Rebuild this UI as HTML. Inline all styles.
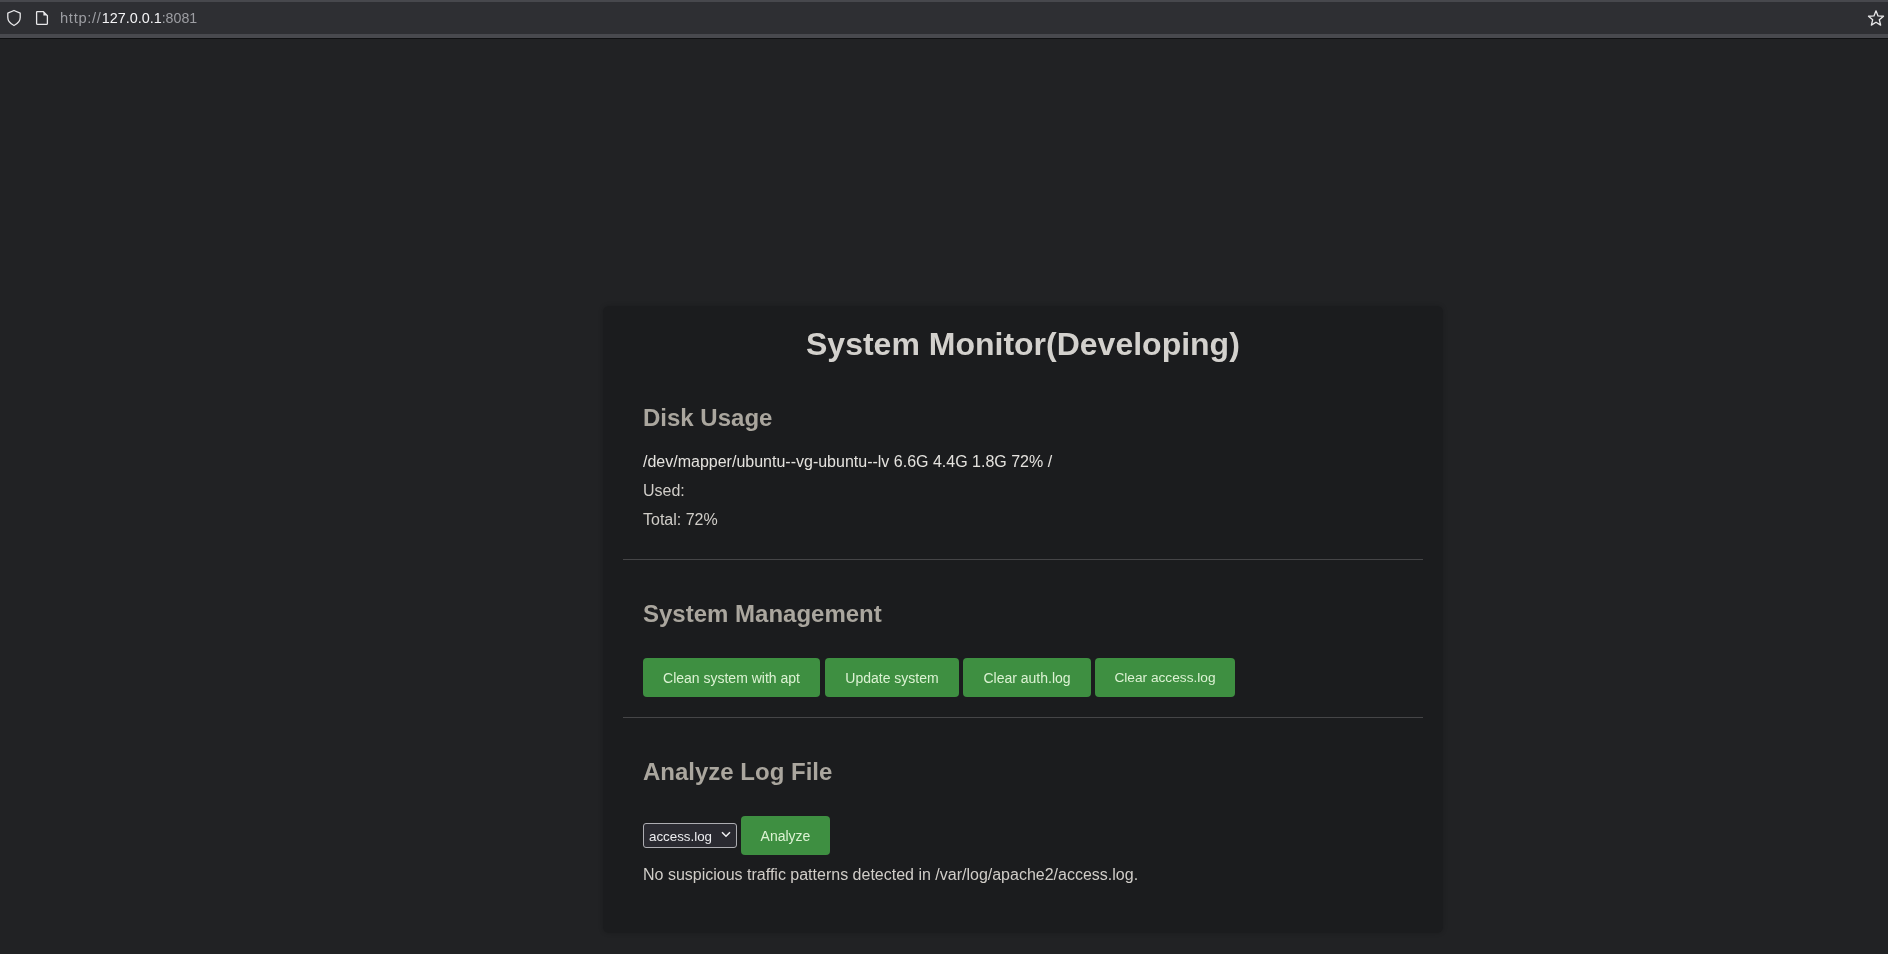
<!DOCTYPE html>
<html>
<head>
<meta charset="utf-8">
<style>
html,body{margin:0;padding:0;}
body{width:1888px;height:954px;background:#212224;overflow:hidden;position:relative;font-family:"Liberation Sans",sans-serif;}
#bar{will-change:transform;position:absolute;left:0;top:0;width:1888px;height:39px;background:#2e2f33;}
#bar .t{position:absolute;left:0;top:0;width:100%;height:2px;background:#47484d;}
#bar .b{position:absolute;left:0;top:34px;width:100%;height:4px;background:#48494e;}
#bar .d{position:absolute;left:0;top:38px;width:100%;height:1px;background:#0f1012;}
#url{position:absolute;left:60px;top:8px;font-size:14.7px;line-height:20px;color:#9d9ea3;white-space:nowrap;}
#url b{font-weight:normal;color:#f4f4f6;font-size:14.4px;}
svg{position:absolute;display:block;}
#card{will-change:transform;position:absolute;left:603px;top:306px;width:840px;height:627px;background:#1b1c1e;border-radius:6px;box-shadow:0 0 5px rgba(0,0,0,0.2);}
.abs{position:absolute;white-space:nowrap;}
.h1{font-size:32px;font-weight:bold;color:#d3d1cd;}
.h2{font-size:24px;font-weight:bold;color:#aaa69e;}
.p{font-size:16px;color:#d0cdc8;}
.hr{position:absolute;left:20px;width:800px;height:1px;background:#454547;}
.btn{position:absolute;height:27px;padding-top:12px;background:#3e8f41;border-radius:4px;color:#dcf2d3;font-size:14px;line-height:16px;text-align:center;}
#sel{position:absolute;left:40px;top:517px;width:92px;height:23px;border:1px solid #adadb2;border-radius:3px;background:#2a2a31;}
</style>
</head>
<body>
<div id="bar">
  <div class="t"></div>
  <div class="b"></div>
  <div class="d"></div>
  <svg style="left:6px;top:9px" width="16" height="18" viewBox="0 0 16 18"><path d="M8 1.5 L14.2 4.2 L14.2 8.5 C14.2 12.5 11 15 8 16.5 C5 15 1.8 12.5 1.8 8.5 L1.8 4.2 Z" fill="none" stroke="#e8e8ea" stroke-width="1.3" stroke-linejoin="round"/></svg>
  <svg style="left:35px;top:10px" width="14" height="16" viewBox="0 0 14 16"><path d="M2.2 1.6 L8.4 1.6 L12.4 5.6 L12.4 13.4 Q12.4 14.4 11.4 14.4 L2.6 14.4 Q1.6 14.4 1.6 13.4 L1.6 2.2 Q1.6 1.6 2.2 1.6 Z" fill="none" stroke="#e8e8ea" stroke-width="1.3" stroke-linejoin="round"/><path d="M8.4 1.6 L8.4 5.6 L12.4 5.6 Z" fill="#e8e8ea"/></svg>
  <div id="url"><span style="letter-spacing:0.7px">http://</span><b>127.0.0.1</b><span style="font-size:14.2px">:8081</span></div>
  <svg style="left:1867px;top:9px" width="18" height="18" viewBox="0 0 18 18"><path d="M9.00 1.80 L11.04 6.89 L16.51 7.26 L12.31 10.77 L13.64 16.09 L9.00 13.18 L4.36 16.09 L5.69 10.77 L1.49 7.26 L6.96 6.89 Z" fill="none" stroke="#e8e8ea" stroke-width="1.3" stroke-linejoin="round"/></svg>
</div>

<div id="card">
  <div class="abs h1" style="left:203px;top:20px;line-height:36px;">System Monitor(Developing)</div>
  <div class="abs h2" style="left:40px;top:98px;line-height:28px;">Disk Usage</div>
  <div class="abs p" style="left:40px;top:147px;line-height:18px;color:#e4e2de;">/dev/mapper/ubuntu--vg-ubuntu--lv 6.6G 4.4G 1.8G 72% /</div>
  <div class="abs p" style="left:40px;top:176px;line-height:18px;">Used:</div>
  <div class="abs p" style="left:40px;top:205px;line-height:18px;">Total: 72%</div>
  <div class="hr" style="top:253px;"></div>

  <div class="abs h2" style="left:40px;top:294px;line-height:28px;">System Management</div>
  <div class="btn" style="left:40px;top:352px;width:177px;">Clean system with apt</div>
  <div class="btn" style="left:222px;top:352px;width:134px;">Update system</div>
  <div class="btn" style="left:360px;top:352px;width:128px;">Clear auth.log</div>
  <div class="btn" style="left:492px;top:352px;width:140px;font-size:13.7px;">Clear access.log</div>
  <div class="hr" style="top:411px;"></div>

  <div class="abs h2" style="left:40px;top:452px;line-height:28px;">Analyze Log File</div>
  <div id="sel"><div class="abs" style="left:5px;top:1px;font-size:13.33px;line-height:23px;color:#ececef;">access.log</div>
    <svg style="left:77px;top:7px" width="10" height="7" viewBox="0 0 10 7"><path d="M1 1.2 L5 5.2 L9 1.2" fill="none" stroke="#f0f0f2" stroke-width="1.5"/></svg>
  </div>
  <div class="btn" style="left:138px;top:510px;width:89px;">Analyze</div>
  <div class="abs p" style="left:40px;top:560px;line-height:18px;">No suspicious traffic patterns detected in /var/log/apache2/access.log.</div>
</div>
</body>
</html>
